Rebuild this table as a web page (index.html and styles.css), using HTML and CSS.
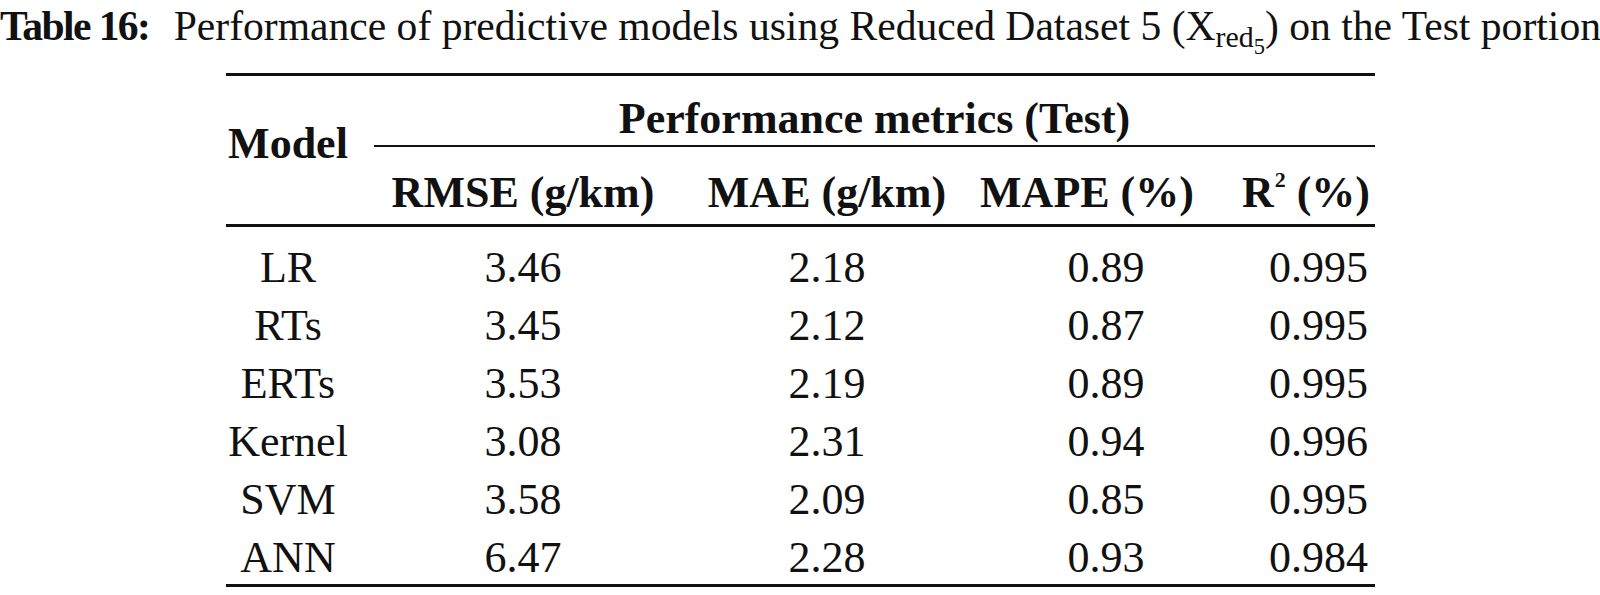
FILE: index.html
```html
<!DOCTYPE html>
<html lang="en">
<head>
<meta charset="utf-8">
<title>Table 16</title>
<link rel="stylesheet" href="styles.css">
</head>
<body>
<p class="caption"><b class="cap-label">Table 16:</b> Performance of predictive models using Reduced Dataset 5 (X<sub class="sub">red<sub class="subsub">5</sub></sub>) on the Test portion</p>
<div class="tbl">
  <div class="thead">
    <div class="h-model">Model</div>
    <div class="h-group">Performance metrics (Test)</div>
    <div class="h-col">RMSE (g/km)</div>
    <div class="h-col">MAE (g/km)</div>
    <div class="h-col h-mape">MAPE (%)</div>
    <div class="h-col h-r2">R<sup class="sup">2</sup> (%)</div>
  </div>
  <div class="tbody">
    <div class="c">LR</div><div class="c">3.46</div><div class="c">2.18</div><div class="c mape">0.89</div><div class="c r2">0.995</div>
    <div class="c">RTs</div><div class="c">3.45</div><div class="c">2.12</div><div class="c mape">0.87</div><div class="c r2">0.995</div>
    <div class="c">ERTs</div><div class="c">3.53</div><div class="c">2.19</div><div class="c mape">0.89</div><div class="c r2">0.995</div>
    <div class="c">Kernel</div><div class="c">3.08</div><div class="c">2.31</div><div class="c mape">0.94</div><div class="c r2">0.996</div>
    <div class="c">SVM</div><div class="c">3.58</div><div class="c">2.09</div><div class="c mape">0.85</div><div class="c r2">0.995</div>
    <div class="c">ANN</div><div class="c">6.47</div><div class="c">2.28</div><div class="c mape">0.93</div><div class="c r2">0.984</div>
  </div>
</div>
</body>
</html>
```
FILE: styles.css
```css
html, body {
  margin: 0;
  padding: 0;
  background: #ffffff;
}
body {
  font-family: "Liberation Serif", "Times New Roman", serif;
  color: #111111;
}
.caption {
  margin: 0;
  padding-top: 4px;
  font-size: 41.6px;
  line-height: 44px;
  white-space: nowrap;
}
.cap-label {
  letter-spacing: -1.6px;
  margin-right: 14px;
}
.sub {
  font-size: 0.72em;
  vertical-align: -0.25em;
  line-height: 0;
}
.subsub {
  font-size: 0.75em;
  vertical-align: -0.3em;
  line-height: 0;
}
.tbl {
  margin: 25px 0 0 226px;
  width: 1149px;
  border-top: 3px solid #111;
  border-bottom: 3px solid #111;
  font-size: 44px;
  line-height: 52px;
}
.thead, .tbody {
  display: grid;
  grid-template-columns: 124px 346px 262px 267px 150px;
}
.thead {
  font-weight: bold;
}
.h-model {
  grid-column: 1;
  grid-row: 1 / span 2;
  display: flex;
  align-items: center;
  justify-content: center;
  padding-bottom: 13px;
  border-bottom: 3px solid #111;
}
.h-group {
  grid-column: 2 / span 4;
  grid-row: 1;
  margin-left: 24px;
  padding-top: 17px;
  text-align: center;
  white-space: nowrap;
  border-bottom: 2px solid #111;
}
.h-col {
  grid-row: 2;
  padding: 20px 0 5px;
  text-align: center;
  white-space: nowrap;
  border-bottom: 3px solid #111;
}
.h-mape {
  padding-right: 9px;
}
.h-r2 {
  text-align: right;
  padding-right: 5px;
}
.sup {
  font-size: 0.5em;
  vertical-align: 0.9em;
  line-height: 0;
  margin-left: 1px;
}
.tbody {
  padding: 19px 0 4px;
  row-gap: 14px;
  line-height: 44px;
}
.c {
  text-align: center;
  white-space: nowrap;
}
.mape {
  padding-left: 29px;
}
.r2 {
  text-align: right;
  padding-right: 7px;
}
```
